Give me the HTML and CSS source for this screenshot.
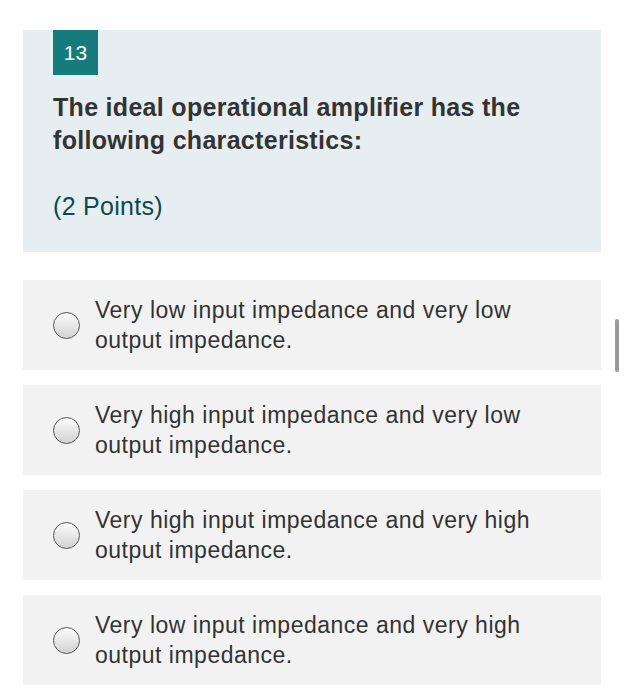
FILE: index.html
```html
<!DOCTYPE html>
<html lang="en">
  <head>
    <meta charset="UTF-8" />
    <title>Question 13</title>
    <link rel="stylesheet" href="styles.css">
  </head>
  <body>
    <div class="page">
      <div class="question-card">
        <div class="question-number">13</div>
        <h2 class="question-title">The ideal operational amplifier has the following characteristics:</h2>
        <p class="question-points">(2 Points)</p>
      </div>
      <div class="choices">
        <label class="choice">
          <span class="radio"></span>
          <span class="choice-text">Very low input impedance and very low output impedance.</span>
        </label>
        <label class="choice">
          <span class="radio"></span>
          <span class="choice-text">Very high input impedance and very low output impedance.</span>
        </label>
        <label class="choice">
          <span class="radio"></span>
          <span class="choice-text">Very high input impedance and very high output impedance.</span>
        </label>
        <label class="choice">
          <span class="radio"></span>
          <span class="choice-text">Very low input impedance and very high output impedance.</span>
        </label>
      </div>
    </div>
    <div class="scroll-thumb"></div>
  </body>
</html>
```

FILE: styles.css
```css
body {
  margin: 0;
  font-family: "Liberation Sans", Arial, sans-serif;
  background: #fff;
  color: #333;
}
.page {
  width: 578px;
  margin-left: 23px;
  padding-top: 30px;
}
.question-card {
  background-color: #e6eef2;
  padding: 0 30px 30px;
  height: 222px;
  box-sizing: border-box;
}
.question-number {
  width: 45px;
  height: 45px;
  background-color: #167b7d;
  color: #fff;
  font-size: 21px;
  display: flex;
  align-items: center;
  justify-content: center;
}
.question-title {
  margin: 16px 0 0;
  font-size: 25px;
  letter-spacing: 0.3px;
  line-height: 33px;
  font-weight: bold;
  color: #333;
  width: 500px;
}
.question-points {
  margin: 33px 0 0;
  font-size: 25px;
  letter-spacing: 0.3px;
  line-height: 33px;
  color: #0c4a4b;
}
.choices {
  margin-top: 28px;
  display: flex;
  flex-direction: column;
  gap: 15px;
}
.choice {
  background-color: #f2f2f2;
  height: 90px;
  display: flex;
  align-items: center;
  padding-left: 30px;
  box-sizing: border-box;
}
.radio {
  flex: none;
  width: 25px;
  height: 25px;
  border: 1.5px solid #555;
  border-radius: 50%;
  background: linear-gradient(#fcfcfc, #d2d2d2);
  margin-right: 15px;
}
.choice-text {
  font-size: 23px;
  letter-spacing: 0.5px;
  line-height: 30px;
  color: #333;
  width: 450px;
}
.scroll-thumb {
  position: absolute;
  left: 615px;
  top: 319px;
  width: 4px;
  height: 53px;
  border-radius: 2px;
  background: #999;
}
```
